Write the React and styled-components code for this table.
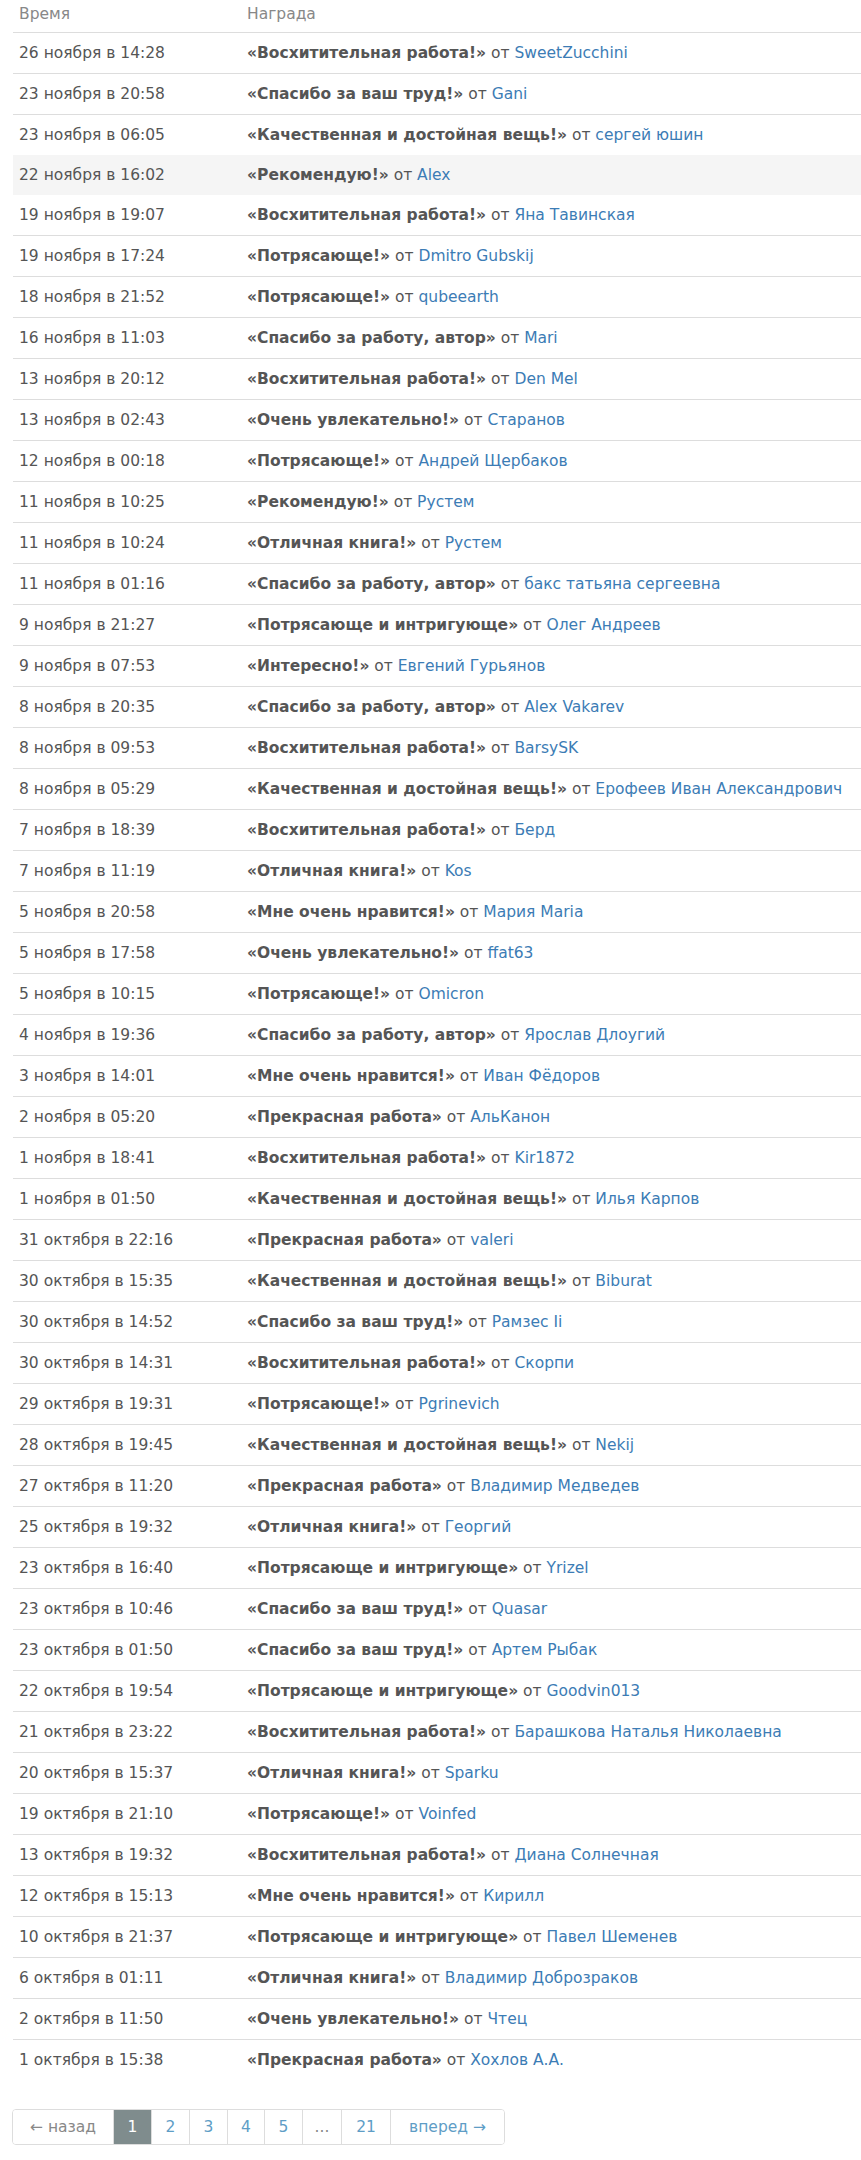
import styled, { createGlobalStyle } from "styled-components";

const GlobalStyle = createGlobalStyle`
  body {
    margin: 0;
    background: #fff;
    font-family: "DejaVu Sans", Verdana, sans-serif;
    color: #555;
  }
`;

const Page = styled.div`
  padding: 0 0 0 13px;
`;

const Table = styled.table`
  width: 100%;
  border-collapse: collapse;
  font-size: 15.5px;
`;

const HeadCell = styled.th`
  text-align: left;
  font-weight: normal;
  color: #888;
  padding: 4px 6px 8px;
  line-height: 20px;
  border-bottom: 1px solid #ddd;
  width: ${(p) => p.$w || "auto"};
`;

const Row = styled.tr`
  background: ${(p) => (p.$active ? "#f5f5f5" : "transparent")};
  & + & td {
    border-top: 1px solid #ddd;
  }
`;

const Cell = styled.td`
  padding: 10px 6px;
  line-height: 20px;
  white-space: nowrap;
`;

const Award = styled.b`
  font-weight: bold;
  color: #555;
`;

const Author = styled.a`
  color: #3c7cb5;
  text-decoration: none;
`;

const Pager = styled.ul`
  display: inline-flex;
  list-style: none;
  margin: 29px 0 0 -1px;
  padding: 0;
  border: 1px solid #ddd;
  border-radius: 4px;
  overflow: hidden;
  font-size: 15.5px;
`;

const PageItem = styled.li`
  box-sizing: border-box;
  width: ${(p) => p.$w}px;
  text-align: center;
  line-height: 34px;
  white-space: nowrap;
  color: ${(p) => (p.$active ? "#fff" : p.$muted ? "#888" : "#5e9dc6")};
  background: ${(p) => (p.$active ? "#7f8c8d" : "#fff")};
  & + & {
    border-left: 1px solid #ddd;
  }
`;

const rows = [
  ["26 ноября в 14:28", "Восхитительная работа!", "SweetZucchini"],
  ["23 ноября в 20:58", "Спасибо за ваш труд!", "Gani"],
  ["23 ноября в 06:05", "Качественная и достойная вещь!", "сергей юшин"],
  ["22 ноября в 16:02", "Рекомендую!", "Alex"],
  ["19 ноября в 19:07", "Восхитительная работа!", "Яна Тавинская"],
  ["19 ноября в 17:24", "Потрясающе!", "Dmitro Gubskij"],
  ["18 ноября в 21:52", "Потрясающе!", "qubeearth"],
  ["16 ноября в 11:03", "Спасибо за работу, автор", "Mari"],
  ["13 ноября в 20:12", "Восхитительная работа!", "Den Mel"],
  ["13 ноября в 02:43", "Очень увлекательно!", "Старанов"],
  ["12 ноября в 00:18", "Потрясающе!", "Андрей Щербаков"],
  ["11 ноября в 10:25", "Рекомендую!", "Рустем"],
  ["11 ноября в 10:24", "Отличная книга!", "Рустем"],
  ["11 ноября в 01:16", "Спасибо за работу, автор", "бакс татьяна сергеевна"],
  ["9 ноября в 21:27", "Потрясающе и интригующе", "Олег Андреев"],
  ["9 ноября в 07:53", "Интересно!", "Евгений Гурьянов"],
  ["8 ноября в 20:35", "Спасибо за работу, автор", "Alex Vakarev"],
  ["8 ноября в 09:53", "Восхитительная работа!", "BarsySK"],
  ["8 ноября в 05:29", "Качественная и достойная вещь!", "Ерофеев Иван Александрович"],
  ["7 ноября в 18:39", "Восхитительная работа!", "Берд"],
  ["7 ноября в 11:19", "Отличная книга!", "Kos"],
  ["5 ноября в 20:58", "Мне очень нравится!", "Мария Maria"],
  ["5 ноября в 17:58", "Очень увлекательно!", "ffat63"],
  ["5 ноября в 10:15", "Потрясающе!", "Omicron"],
  ["4 ноября в 19:36", "Спасибо за работу, автор", "Ярослав Длоугий"],
  ["3 ноября в 14:01", "Мне очень нравится!", "Иван Фёдоров"],
  ["2 ноября в 05:20", "Прекрасная работа", "АльКанон"],
  ["1 ноября в 18:41", "Восхитительная работа!", "Kir1872"],
  ["1 ноября в 01:50", "Качественная и достойная вещь!", "Илья Карпов"],
  ["31 октября в 22:16", "Прекрасная работа", "valeri"],
  ["30 октября в 15:35", "Качественная и достойная вещь!", "Biburat"],
  ["30 октября в 14:52", "Спасибо за ваш труд!", "Рамзес Ii"],
  ["30 октября в 14:31", "Восхитительная работа!", "Скорпи"],
  ["29 октября в 19:31", "Потрясающе!", "Pgrinevich"],
  ["28 октября в 19:45", "Качественная и достойная вещь!", "Nekij"],
  ["27 октября в 11:20", "Прекрасная работа", "Владимир Медведев"],
  ["25 октября в 19:32", "Отличная книга!", "Георгий"],
  ["23 октября в 16:40", "Потрясающе и интригующе", "Yrizel"],
  ["23 октября в 10:46", "Спасибо за ваш труд!", "Quasar"],
  ["23 октября в 01:50", "Спасибо за ваш труд!", "Артем Рыбак"],
  ["22 октября в 19:54", "Потрясающе и интригующе", "Goodvin013"],
  ["21 октября в 23:22", "Восхитительная работа!", "Барашкова Наталья Николаевна"],
  ["20 октября в 15:37", "Отличная книга!", "Sparku"],
  ["19 октября в 21:10", "Потрясающе!", "Voinfed"],
  ["13 октября в 19:32", "Восхитительная работа!", "Диана Солнечная"],
  ["12 октября в 15:13", "Мне очень нравится!", "Кирилл"],
  ["10 октября в 21:37", "Потрясающе и интригующе", "Павел Шеменев"],
  ["6 октября в 01:11", "Отличная книга!", "Владимир Доброзраков"],
  ["2 октября в 11:50", "Очень увлекательно!", "Чтец"],
  ["1 октября в 15:38", "Прекрасная работа", "Хохлов А.А."],
];

const pages = [
  { label: "← назад", muted: true, w: 100 },
  { label: "1", active: true, w: 38 },
  { label: "2", w: 38 },
  { label: "3", w: 38 },
  { label: "4", w: 37 },
  { label: "5", w: 38 },
  { label: "...", muted: true, w: 39 },
  { label: "21", w: 49 },
  { label: "вперед →", w: 114 },
];

export default function App() {
  return (
    <Page>
      <GlobalStyle />
      <Table>
        <thead>
          <tr>
            <HeadCell $w="216px">Время</HeadCell>
            <HeadCell>Награда</HeadCell>
          </tr>
        </thead>
        <tbody>
          {rows.map(([time, award, author], i) => (
            <Row key={i} $active={i === 3}>
              <Cell>{time}</Cell>
              <Cell>
                <Award>«{award}»</Award> от <Author href="#">{author}</Author>
              </Cell>
            </Row>
          ))}
        </tbody>
      </Table>
      <Pager>
        {pages.map((p) => (
          <PageItem key={p.label} $active={p.active} $muted={p.muted} $w={p.w}>
            {p.label}
          </PageItem>
        ))}
      </Pager>
    </Page>
  );
}
